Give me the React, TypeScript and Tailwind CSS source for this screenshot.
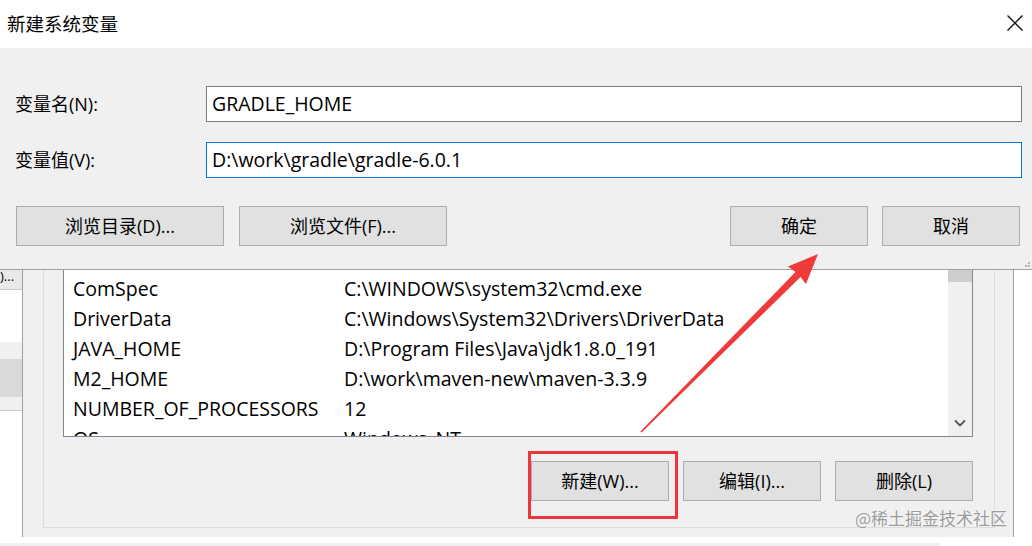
import React from 'react';

const UI = { fontFamily: '"Open Sans", "Noto Sans CJK SC", sans-serif' };

const rows: [string, string][] = [
  ['ComSpec', 'C:\\WINDOWS\\system32\\cmd.exe'],
  ['DriverData', 'C:\\Windows\\System32\\Drivers\\DriverData'],
  ['JAVA_HOME', 'D:\\Program Files\\Java\\jdk1.8.0_191'],
  ['M2_HOME', 'D:\\work\\maven-new\\maven-3.3.9'],
  ['NUMBER_OF_PROCESSORS', '12'],
  ['OS', 'Windows_NT'],
];

// classic win10 push button
const WinButton: React.FC<{ label: string; className?: string }> = ({ label, className = '' }) => (
  <div
    className={`h-[40px] flex items-center justify-center bg-[#e1e1e1] border border-[#adadad] text-[18px] text-black ${className}`}
  >
    {label}
  </div>
);

export default function App() {
  return (
    <div className="relative w-[1032px] h-[546px] overflow-hidden bg-white" style={UI}>
      {/* dialog */}
      <div className="flex flex-col border-b border-[#a0a0a0]">
        <div className="h-[48px] flex items-center justify-between pl-[7px] pr-[8px] bg-white">
          <span className="text-[18.5px] text-black leading-none">新建系统变量</span>
          <svg width="18" height="18" viewBox="0 0 18 18" className="mt-[-2px]">
            <path d="M1.5 1.5 L16.5 16.5 M16.5 1.5 L1.5 16.5" stroke="#111" strokeWidth="1.4" />
          </svg>
        </div>
        <div className="relative h-[221px] bg-[#f0f0f0] pt-[38px] px-[10px]">
          <div className="flex items-center h-[36px]">
            <span className="w-[196px] pl-[5px] text-[18px] text-black">变量名(N):</span>
            <div className="flex-1 h-[36px] flex items-center bg-white border border-[#7a7a7a] px-[5px] text-[19.5px] text-black">
              GRADLE_HOME
            </div>
          </div>
          <div className="flex items-center h-[36px] mt-[20px]">
            <span className="w-[196px] pl-[5px] text-[18px] text-black">变量值(V):</span>
            <div className="flex-1 h-[36px] flex items-center bg-white border border-[#0078d7] px-[5px] text-[19.5px] text-black">
              D:\work\gradle\gradle-6.0.1
            </div>
          </div>
          <div className="flex items-center mt-[28px] pl-[6px] pr-[2px]">
            <WinButton label="浏览目录(D)..." className="w-[208px]" />
            <WinButton label="浏览文件(F)..." className="w-[208px] ml-[15px]" />
            <div className="flex-1" />
            <WinButton label="确定" className="w-[138px]" />
            <WinButton label="取消" className="w-[138px] ml-[14px]" />
          </div>
          {/* size grip */}
          <div className="absolute right-[2px] bottom-[2px] grid grid-cols-3 gap-[1px]">
            <span className="w-[2px] h-[2px]" />
            <span className="w-[2px] h-[2px]" />
            <span className="w-[2px] h-[2px] bg-[#b5b5b5]" />
            <span className="w-[2px] h-[2px]" />
            <span className="w-[2px] h-[2px] bg-[#b5b5b5]" />
            <span className="w-[2px] h-[2px] bg-[#b5b5b5]" />
          </div>
        </div>
      </div>

      {/* window behind the dialog */}
      <div className="flex h-[267px]">
        <div className="w-[22px] flex flex-col bg-white">
          <div className="h-[20px] bg-[#e9e9e9] border-b border-[#c8c8c8] text-[13px] leading-[12px] overflow-hidden text-black whitespace-nowrap">
            )...
          </div>
          <div className="h-[52px]" />
          <div className="h-[17px] bg-[#f0f0f0]" />
          <div className="h-[38px] bg-[#d9d9d9]" />
          <div className="h-[14px] bg-[#f0f0f0] border-b border-[#c8c8c8]" />
        </div>
        <div className="w-[992px] bg-[#f0f0f0] border-l border-r border-[#a0a0a0] pl-[20px] pr-[18px]">
          <div className="h-[258px] border-l border-r border-b border-[#dcdcdc] pl-[19px] pr-[21px]">
            {/* list view */}
            <div className="relative h-[167px] bg-white border-l border-r border-b border-[#828790] overflow-hidden flex">
              <div className="flex-1 pt-[4px] pl-[9px]">
                {rows.map(([k, v]) => (
                  <div key={k} className="h-[30px] flex items-center text-[19.5px] text-black whitespace-nowrap">
                    <span className="w-[271px]">{k}</span>
                    <span>{v}</span>
                  </div>
                ))}
              </div>
              <div className="w-[24px] bg-[#f0f0f0] flex flex-col justify-between">
                <div className="h-[12px] bg-[#cdcdcd]" />
                <div className="h-[26px] flex items-center justify-center">
                  <svg width="12" height="8" viewBox="0 0 12 8">
                    <path d="M1 1.5 L6 6.5 L11 1.5" stroke="#555" strokeWidth="1.8" fill="none" />
                  </svg>
                </div>
              </div>
            </div>
            <div className="flex justify-end mt-[24px] gap-[14px]">
              <WinButton label="新建(W)..." className="w-[138px]" />
              <WinButton label="编辑(I)..." className="w-[138px]" />
              <WinButton label="删除(L)" className="w-[138px]" />
            </div>
          </div>
        </div>
      </div>
      <div className="mt-[6px] w-[940px] h-[4px] bg-[#efefef]" />

      {/* annotations */}
      <div className="absolute left-[528px] top-[451px] w-[150px] h-[68px] border-[3px] border-[#e8383b]" />
      <svg className="absolute left-0 top-0 pointer-events-none" width="1032" height="546" viewBox="0 0 1032 546">
        <polygon
          points="818,254 806,284 800.5,277 641.6,432.6 640.4,431.4 795.5,272 788,266.5"
          fill="#ee3a3a"
        />
      </svg>
      <span
        className="absolute left-[855px] top-[507px] text-[17px] leading-[22px] text-[#9c9c9c] [text-shadow:0_0_2px_#fff]"
        style={{ fontFamily: '"Noto Sans CJK SC", sans-serif' }}
      >
        @稀土掘金技术社区
      </span>
    </div>
  );
}
